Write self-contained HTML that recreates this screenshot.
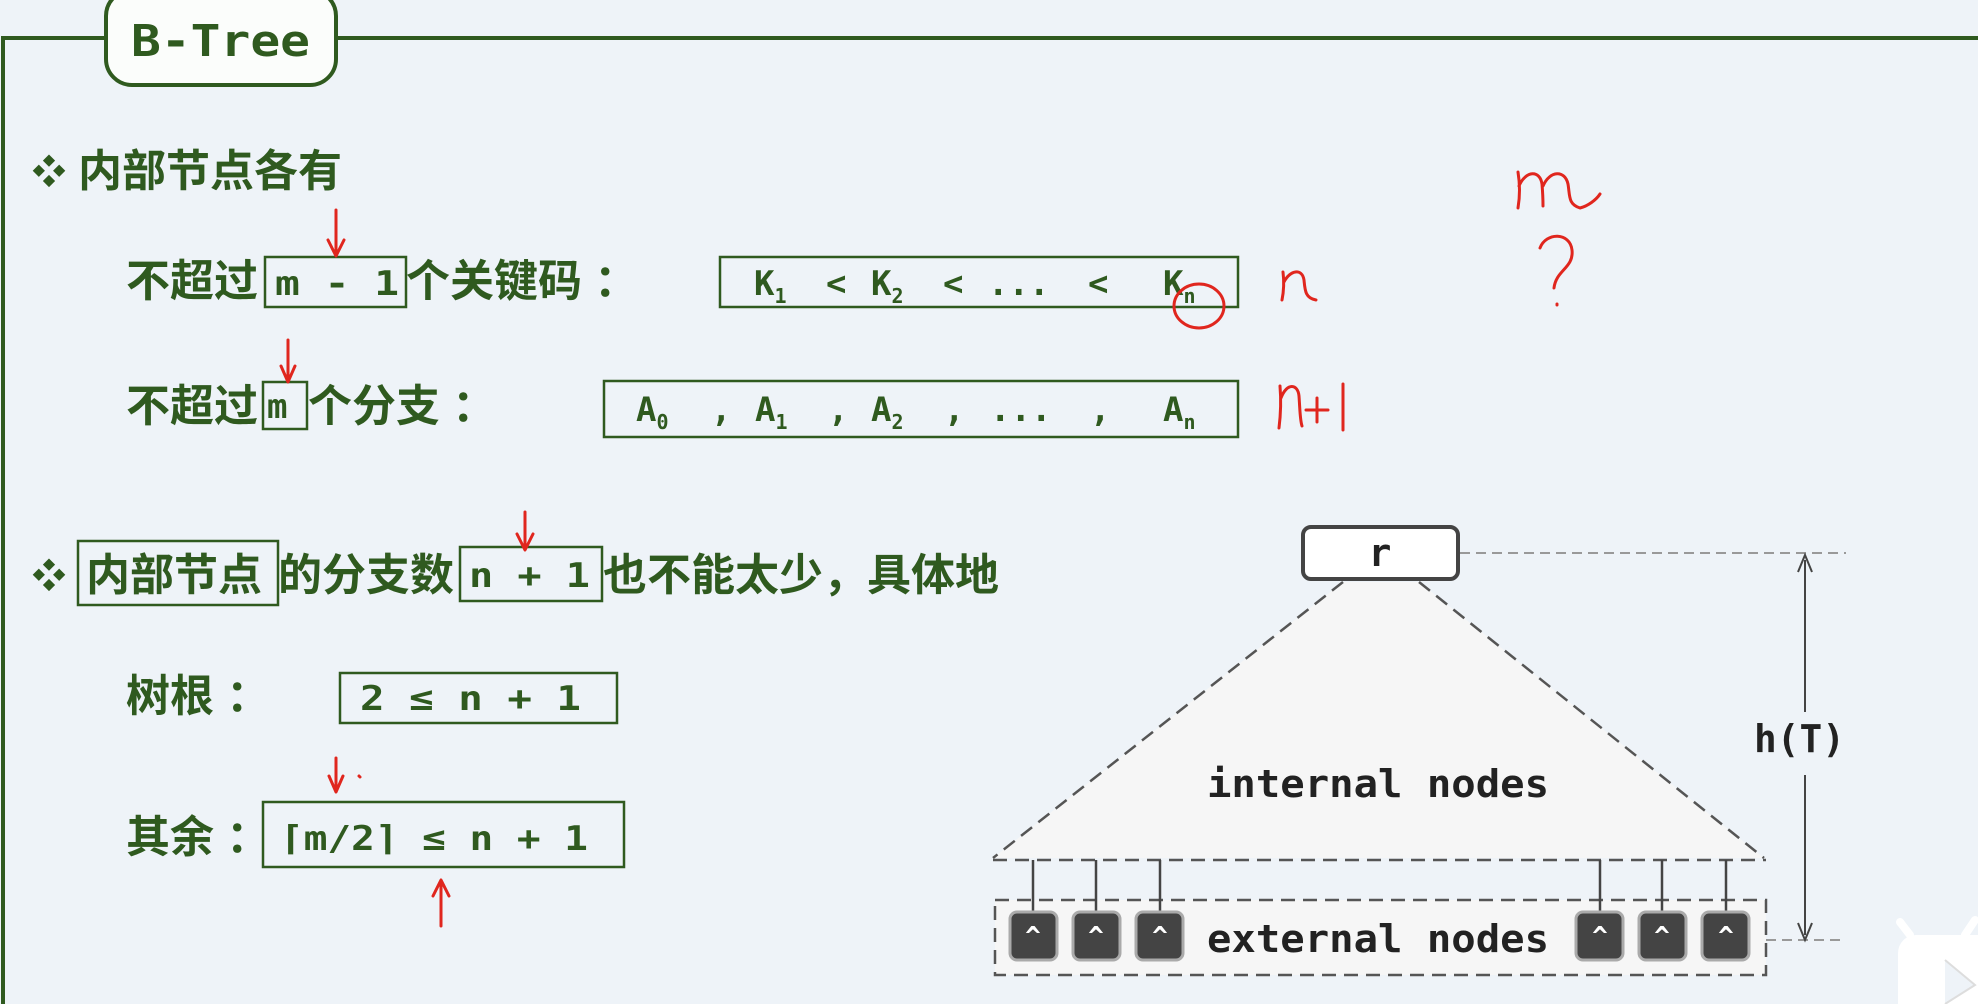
<!DOCTYPE html>
<html><head><meta charset="utf-8"><style>
html,body{margin:0;padding:0;background:#eef3f8;}
svg{display:block}
.cn{font-family:"Liberation Sans","Noto Sans CJK SC",sans-serif;font-weight:bold;fill:#2f5a1f;font-size:44px}
.mo{font-family:"DejaVu Sans Mono","Liberation Mono",monospace;font-weight:bold;fill:#2f5a1f;font-size:34px}
.sub{font-size:20px}
.dm{font-family:"DejaVu Sans Mono","Liberation Mono",monospace;font-weight:bold;fill:#222;font-size:38px}
.red{stroke:#e0261e;stroke-width:3;fill:none;stroke-linecap:round;stroke-linejoin:round}
</style></head><body>
<svg width="1978" height="1004" viewBox="0 0 1978 1004" xmlns="http://www.w3.org/2000/svg">
<rect width="1978" height="1004" fill="#eef3f8"/>
<path d="M3 1004 V38 H110 M334 38 H1978" stroke="#2f5a1f" stroke-width="4" fill="none"/>
<rect x="106" y="-10" width="230" height="95" rx="26" fill="#fbfdfb" stroke="#2f5a1f" stroke-width="4"/>
<text x="131" y="56" class="mo" style="font-size:44px" textLength="179" lengthAdjust="spacingAndGlyphs">B-Tree</text>

<text x="32" y="184" class="cn" style="font-size:34px">❖</text>
<text x="78" y="186" class="cn">内部节点各有</text>

<text x="126" y="296" class="cn">不超过</text>
<rect x="265" y="257" width="141" height="50" fill="none" stroke="#2f5a1f" stroke-width="2.5"/>
<text x="275" y="295" class="mo" textLength="124" lengthAdjust="spacingAndGlyphs">m - 1</text>
<text x="406" y="296" class="cn">个关键码 ：</text>
<rect x="720" y="257" width="518" height="50" fill="none" stroke="#2f5a1f" stroke-width="2.5"/>
<text class="mo" y="295"><tspan x="754">K</tspan><tspan class="sub" dy="8">1</tspan><tspan x="826" dy="-8">&lt;</tspan><tspan x="871">K</tspan><tspan class="sub" dy="8">2</tspan><tspan x="943" dy="-8">&lt;</tspan><tspan x="988">...</tspan><tspan x="1088">&lt;</tspan><tspan x="1163">K</tspan><tspan class="sub" dy="8">n</tspan></text>

<text x="126" y="421" class="cn">不超过</text>
<rect x="263" y="382" width="44" height="47" fill="none" stroke="#2f5a1f" stroke-width="2.5"/>
<text x="267" y="418" class="mo">m</text>
<text x="308" y="421" class="cn">个分支 ：</text>
<rect x="604" y="381" width="634" height="56" fill="none" stroke="#2f5a1f" stroke-width="2.5"/>
<text class="mo" y="421"><tspan x="636">A</tspan><tspan class="sub" dy="8">0</tspan><tspan x="711" dy="-8">,</tspan><tspan x="755">A</tspan><tspan class="sub" dy="8">1</tspan><tspan x="828" dy="-8">,</tspan><tspan x="871">A</tspan><tspan class="sub" dy="8">2</tspan><tspan x="944" dy="-8">,</tspan><tspan x="990">...</tspan><tspan x="1090">,</tspan><tspan x="1163">A</tspan><tspan class="sub" dy="8">n</tspan></text>

<text x="32" y="588" class="cn" style="font-size:34px">❖</text>
<rect x="78" y="541" width="200" height="64" fill="none" stroke="#2f5a1f" stroke-width="2.5"/>
<text x="86" y="590" class="cn">内部节点</text>
<text x="278" y="590" class="cn">的分支数</text>
<rect x="460" y="547" width="142" height="54" fill="none" stroke="#2f5a1f" stroke-width="2.5"/>
<text x="469" y="587" class="mo" textLength="121" lengthAdjust="spacingAndGlyphs">n + 1</text>
<text x="603" y="590" class="cn">也不能太少，具体地</text>

<text x="126" y="711" class="cn">树根 ：</text>
<rect x="340" y="673" width="277" height="50" fill="none" stroke="#2f5a1f" stroke-width="2.5"/>
<text x="360" y="710" class="mo" textLength="221" lengthAdjust="spacingAndGlyphs">2 ≤ n + 1</text>

<text x="126" y="852" class="cn">其余 ：</text>
<rect x="263" y="802" width="361" height="65" fill="none" stroke="#2f5a1f" stroke-width="2.5"/>
<text x="280" y="850" class="mo" textLength="308" lengthAdjust="spacingAndGlyphs">⌈m/2⌉ ≤ n + 1</text>

<polygon points="1343,582 1419,582 1764,858 993,858" fill="#f6f6f6"/>
<path d="M1343,582 L993,858 M1419,582 L1764,858" stroke="#555" stroke-width="2.5" stroke-dasharray="14,8" fill="none"/>
<path d="M993,860 H1766" stroke="#555" stroke-width="2.5" stroke-dasharray="14,8"/>
<rect x="995" y="900" width="771" height="75" fill="#f6f6f6" stroke="#555" stroke-width="2.5" stroke-dasharray="14,8"/>
<path d="M1460,553 H1846 M1766,940 H1846" stroke="#999" stroke-width="2" stroke-dasharray="10,6"/>
<rect x="1303" y="527" width="155" height="52" rx="8" fill="#fff" stroke="#444" stroke-width="4"/>
<text x="1380" y="566" text-anchor="middle" class="dm">r</text>
<g stroke="#444" stroke-width="2.5">
<path d="M1033,860 V915 M1096,860 V915 M1160,860 V915 M1600,860 V915 M1662,860 V915 M1726,860 V915"/>
</g>
<g fill="#444" stroke="#aaa" stroke-width="3">
<rect x="1010" y="912" width="47" height="48" rx="7"/>
<rect x="1073" y="912" width="47" height="48" rx="7"/>
<rect x="1136" y="912" width="47" height="48" rx="7"/>
<rect x="1576" y="912" width="47" height="48" rx="7"/>
<rect x="1639" y="912" width="47" height="48" rx="7"/>
<rect x="1702" y="912" width="47" height="48" rx="7"/>
</g>
<g font-family="DejaVu Sans Mono,monospace" font-size="26" fill="#fff" text-anchor="middle" font-weight="bold">
<text x="1033" y="945">^</text><text x="1096" y="945">^</text><text x="1160" y="945">^</text>
<text x="1600" y="945">^</text><text x="1662" y="945">^</text><text x="1726" y="945">^</text>
</g>
<text x="1207" y="797" class="dm" textLength="342" lengthAdjust="spacingAndGlyphs">internal nodes</text>
<text x="1207" y="952" class="dm" textLength="342" lengthAdjust="spacingAndGlyphs">external nodes</text>
<path d="M1805,560 V712 M1805,775 V935" stroke="#444" stroke-width="2"/>
<path d="M1798,572 L1805,555 L1812,572 M1798,923 L1805,940 L1812,923" stroke="#444" stroke-width="2" fill="none"/>
<text x="1754" y="752" class="dm" textLength="91" lengthAdjust="spacingAndGlyphs">h(T)</text>

<g class="red">
<path d="M336,210 V254 M328,240 L336,256 L344,240"/>
<path d="M288,340 V380 M281,366 L288,382 L295,366"/>
<path d="M525,512 V548 M517,534 L525,550 L533,534"/>
<path d="M336,758 V790 M329,776 L336,792 L343,776"/>
<path d="M359,776 l1,1"/>
<path d="M441,926 V882 M433,896 L441,880 L449,896"/>
<ellipse cx="1199" cy="306" rx="25" ry="22"/>
<path d="M1282,300 C1284,290 1284,280 1283,272 M1284,282 C1290,270 1302,268 1304,280 C1305,290 1305,298 1316,300"/>
<path d="M1279,428 C1281,412 1281,398 1280,386 M1281,398 C1287,382 1298,384 1299,396 C1300,410 1300,420 1302,426 M1306,410 H1328 M1317,398 V422 M1343,384 V430"/>
<path d="M1518,208 C1520,196 1520,184 1518,172 M1519,186 C1526,170 1540,170 1542,184 C1543,196 1543,204 1543,206 M1543,186 C1550,170 1565,170 1568,184 C1570,196 1568,204 1580,208 C1588,206 1596,200 1600,194"/>
<path d="M1540,248 C1546,232 1570,232 1572,250 C1574,268 1556,270 1554,288 M1557,304 l0,1"/>
</g>

<g>
<rect x="1898" y="935" width="100" height="90" rx="18" fill="#fff"/>
<path d="M1910,935 L1900,922 M1965,935 L1975,920" stroke="#fff" stroke-width="8" stroke-linecap="round"/>
<path d="M1945,960 L1975,985 L1945,1004" fill="#eef3f8" stroke="#ddd" stroke-width="2"/>
</g>
</svg>
</body></html>
